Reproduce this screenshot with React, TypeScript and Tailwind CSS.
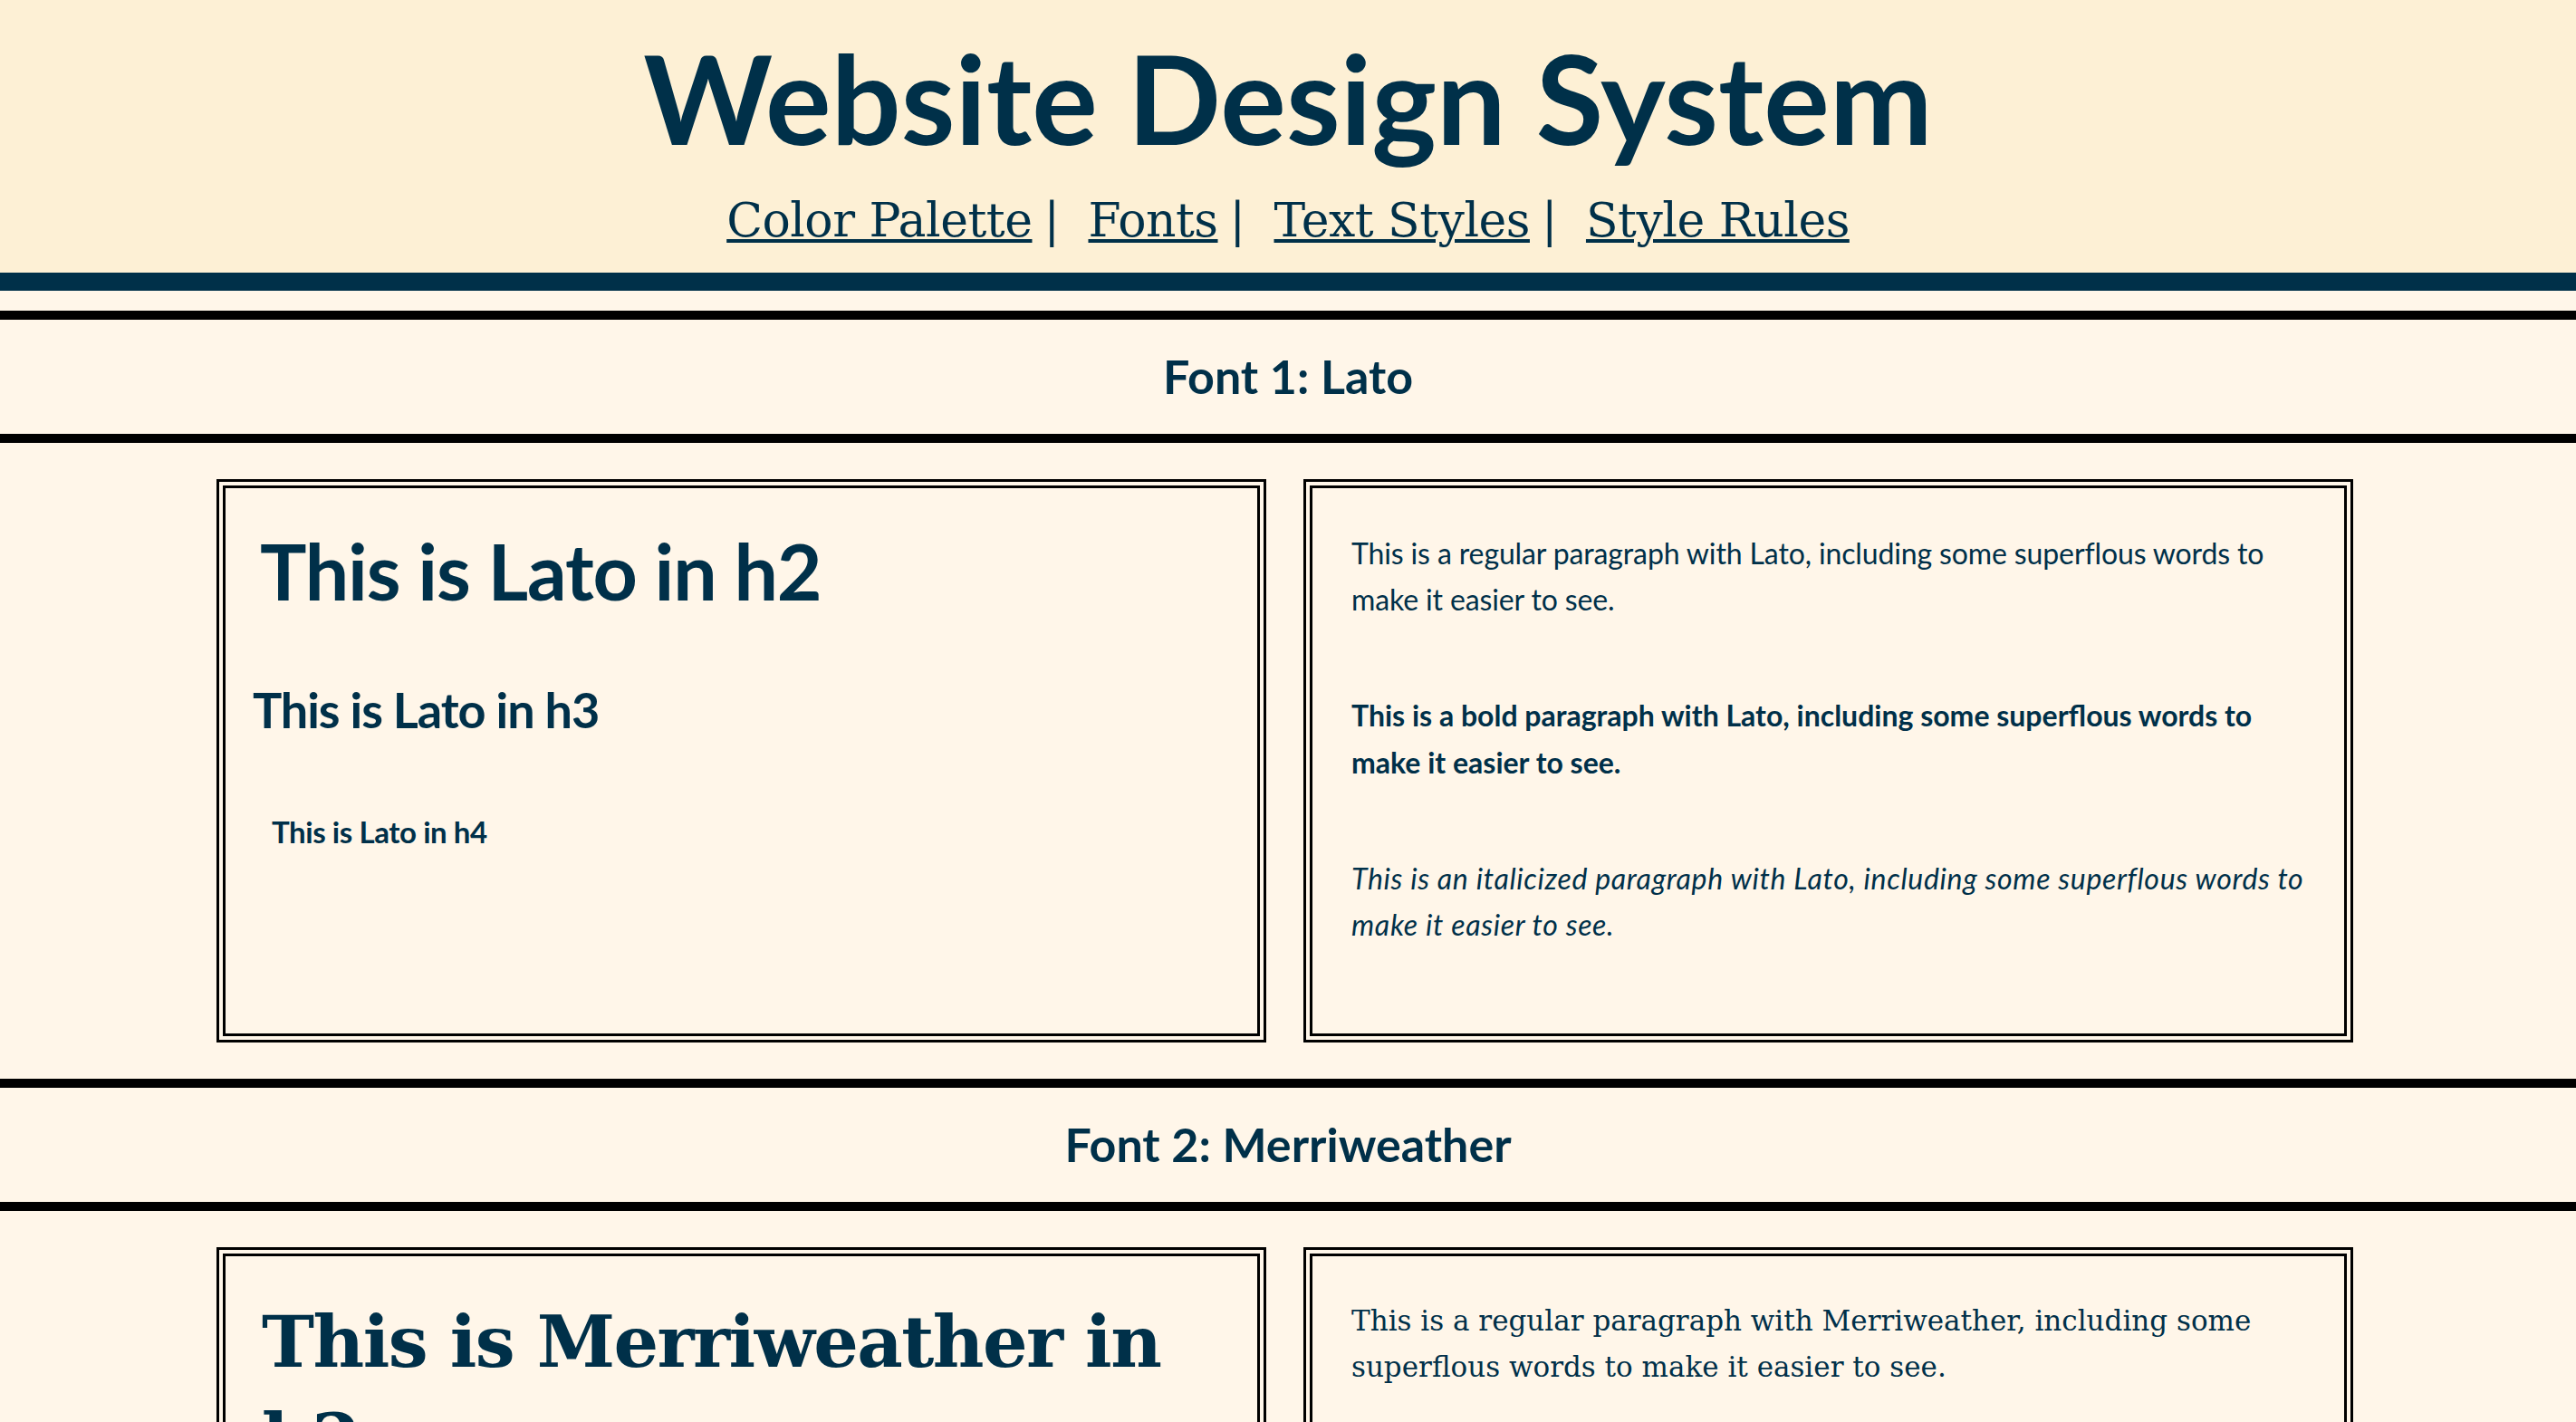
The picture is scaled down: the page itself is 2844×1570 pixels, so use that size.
import React from "react";

const links = ["Color Palette", "Fonts", "Text Styles", "Style Rules"];

const SectionTitle = ({ children }: { children: React.ReactNode }) => (
  <h2 className="h-[146px] border-y-[10px] border-black flex items-center justify-center pb-[3px] text-[52px] font-bold leading-none">
    {children}
  </h2>
);

const Card = ({ children, className = "" }: { children: React.ReactNode; className?: string }) => (
  <div className={`w-[1159px] border-[10px] border-double border-black ${className}`}>{children}</div>
);

const App = () => {
  return (
    <div className="min-h-screen bg-[#fff6e9] font-['Lato',sans-serif] text-[#003049]">
      {/* Header */}
      <header className="bg-[#fdf0d5] border-b-[20px] border-[#003049] pt-[40px] pb-[32px] flex flex-col items-center">
        <h1 className="text-[136px] font-bold leading-none">Website Design System</h1>
        <nav className="mt-[41px] flex items-baseline font-['DejaVu_Serif',serif] text-[52px] leading-none tracking-[-0.01em]">
          {links.map((l, i) => (
            <span key={l} className="flex items-baseline">
              {i > 0 && <span className="ml-[13px] mr-[32px]">|</span>}
              <a href="#" className="underline decoration-[4px] underline-offset-[3px]">
                {l}
              </a>
            </span>
          ))}
        </nav>
      </header>

      <main className="mt-[22px]">
        {/* Font 1 */}
        <section>
          <SectionTitle>Font 1: Lato</SectionTitle>
          <div className="py-[40px] pr-[7px] flex justify-center gap-[41px]">
            <Card className="pt-[39px]">
              <h2 className="pl-[38px] text-[86px] font-bold leading-[1.2] tracking-[-0.013em]">This is Lato in h2</h2>
              <h3 className="mt-[71px] pl-[30px] text-[54px] font-bold leading-[1.2] tracking-[-0.02em]">
                This is Lato in h3
              </h3>
              <h4 className="mt-[82px] pl-[51px] text-[33px] font-bold leading-[1.2] tracking-[-0.013em]">
                This is Lato in h4
              </h4>
            </Card>
            <Card className="pt-[46px] pb-[95px] pl-[43px] pr-[38px] text-[32px] leading-[1.6]">
              <p className="tracking-[-0.004em]">
                This is a regular paragraph with Lato, including some superflous words to make it easier to see.
              </p>
              <p className="mt-[77px] font-bold">
                This is a bold paragraph with Lato, including some superflous words to make it easier to see.
              </p>
              <p className="mt-[77px] italic tracking-[0.021em]">
                This is an italicized paragraph with Lato, including some superflous words to make it easier to see.
              </p>
            </Card>
          </div>
        </section>

        {/* Font 2 */}
        <section>
          <SectionTitle>Font 2: Merriweather</SectionTitle>
          <div className="py-[40px] pr-[7px] flex justify-center gap-[41px] font-['DejaVu_Serif',serif]">
            <Card className="pt-[41px] pr-[60px]">
              <h2 className="pl-[40px] text-[78px] font-bold leading-[108px] tracking-[-0.02em]">
                This is Merriweather in h2
              </h2>
              <h3 className="mt-[60px] pl-[30px] text-[48px] font-bold leading-[1.25] tracking-[-0.02em]">
                This is Merriweather in h3
              </h3>
              <h4 className="mt-[70px] pl-[51px] text-[30px] font-bold leading-[1.25] tracking-[-0.02em]">
                This is Merriweather in h4
              </h4>
            </Card>
            <Card className="pt-[46px] pb-[95px] px-[43px] text-[31px] leading-[51px]">
              <p>This is a regular paragraph with Merriweather, including some superflous words to make it easier to see.</p>
              <p className="mt-[77px] font-bold">
                This is a bold paragraph with Merriweather, including some superflous words to make it easier to see.
              </p>
              <p className="mt-[77px] italic">
                This is an italicized paragraph with Merriweather, including some superflous words to make it easier to
                see.
              </p>
            </Card>
          </div>
        </section>
      </main>
    </div>
  );
};

export default App;
